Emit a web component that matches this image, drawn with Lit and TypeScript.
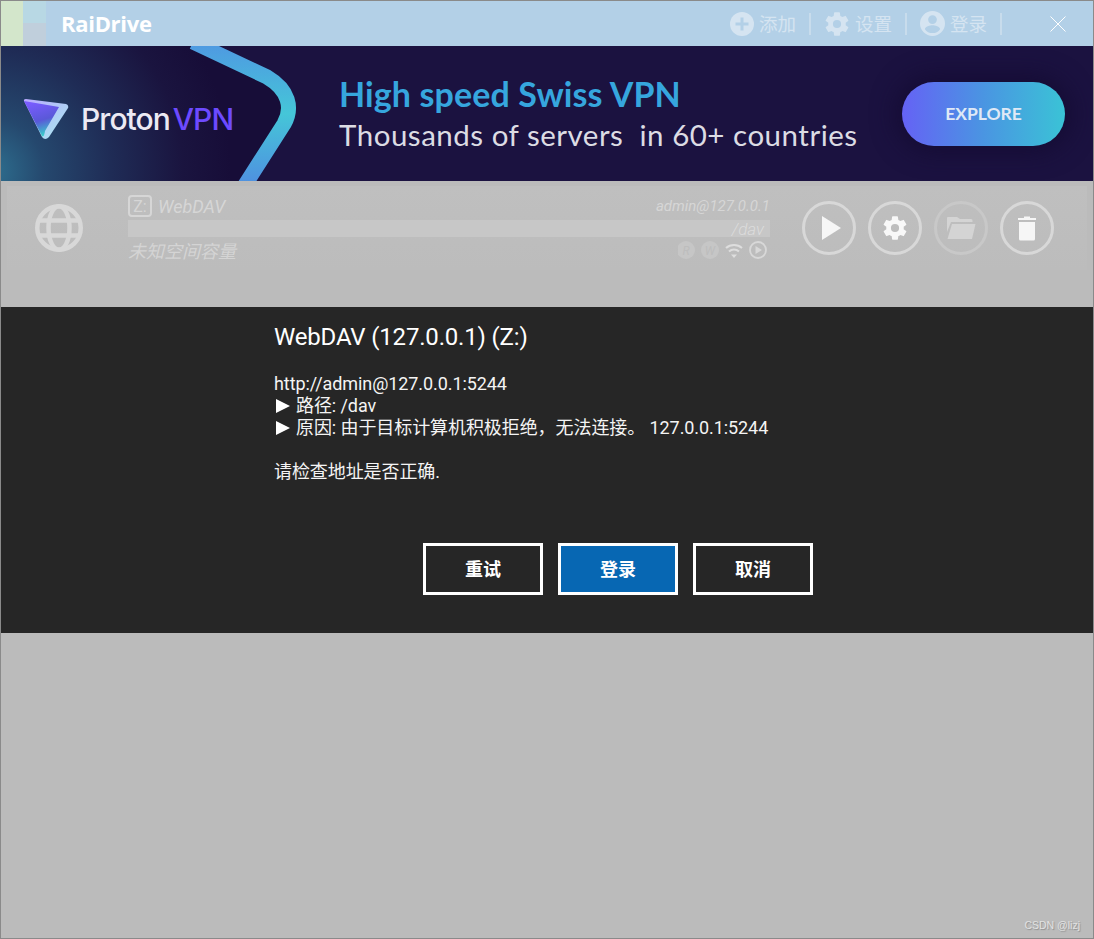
import { LitElement, html, css } from "lit";
import { customElement } from "lit/decorators.js";

const gear = (fill: string, size: number) => html`<svg width=${size} height=${size} viewBox="0 0 24 24"><path fill=${fill} d="M19.43 12.98c.04-.32.07-.64.07-.98s-.03-.66-.07-.98l2.11-1.65a.5.5 0 0 0 .12-.64l-2-3.46a.5.5 0 0 0-.61-.22l-2.49 1a7.3 7.3 0 0 0-1.69-.98l-.38-2.65A.49.49 0 0 0 14 2h-4a.49.49 0 0 0-.49.42l-.38 2.65c-.61.25-1.17.59-1.69.98l-2.49-1a.49.49 0 0 0-.61.22l-2 3.46a.49.49 0 0 0 .12.64l2.11 1.65c-.04.32-.07.65-.07.98s.03.66.07.98l-2.11 1.65a.5.5 0 0 0-.12.64l2 3.46c.12.22.39.3.61.22l2.49-1c.52.4 1.08.73 1.69.98l.38 2.65c.03.24.24.42.49.42h4c.25 0 .46-.18.49-.42l.38-2.65c.61-.25 1.17-.59 1.69-.98l2.49 1c.23.09.49 0 .61-.22l2-3.46a.5.5 0 0 0-.12-.64l-2.11-1.65zM12 15.5a3.5 3.5 0 1 1 0-7 3.5 3.5 0 0 1 0 7z"/></svg>`;

@customElement("app-root")
export class AppRoot extends LitElement {
  static styles = css`
    :host { display: block; position: relative; width: 1094px; height: 939px; box-sizing: border-box; border: 1px solid #8a8a8a; background: #bbbbbb; font-family: Roboto, "Noto Sans CJK SC", sans-serif; overflow: hidden; }
    .shell { display: flex; flex-direction: column; height: 100%; }
    .titlebar { height: 45px; flex: none; display: flex; align-items: center; background: #b3d0e7; }
    .tiles { display: grid; grid-template-columns: 22px 23px; grid-template-rows: 22px 23px; height: 45px; width: 45px; }
    .t1 { grid-row: 1 / 3; background: #d3e6cb; }
    .t2 { background: #b8d8e4; }
    .t3 { background: #c0cfdc; }
    .brand { margin: -2px 0 0 15px; font: 700 22px "Open Sans", sans-serif; letter-spacing: -0.3px; color: #fff; }
    .tools { margin-left: auto; display: flex; align-items: center; height: 100%; }
    .tool { display: flex; align-items: center; gap: 5px; color: #d5e4f1; font: 18.5px "Noto Sans CJK SC", sans-serif; }
    .tool.g { gap: 4px; }
    .tool span { display: block; width: 37px; white-space: nowrap; margin-top: -2px; }
    .sep { width: 2px; height: 22px; background: #c8dcec; margin: 0 13px; }
    .sep.a { margin-right: 12px; }
    .close { margin-left: 35px; margin-right: 27px; display: block; }

    .banner { position: relative; height: 135px; flex: none; background: #1b1240; display: flex; align-items: center; overflow: hidden; }
    .art { position: absolute; left: 0; top: 0; }
    .logo { position: relative; display: flex; align-items: center; margin: 11px 0 0 22px; width: 316px; }
    .logotext { margin-left: 12px; font: 500 30px Inter, sans-serif; letter-spacing: -0.95px; color: #eceaf4; }
    .logotext b { font-weight: 500; color: #6d4aff; margin-left: 3px; }
    .pitch { position: relative; width: 563px; margin-top: 2px; font-family: Lato, sans-serif; }
    .pitch .h { font-size: 34px; font-weight: 700; color: #36a6de; line-height: 40px; letter-spacing: 0.1px; }
    .pitch .s { font-size: 29.5px; font-weight: 400; color: #dcdce4; line-height: 42px; white-space: pre; letter-spacing: 0.51px; }
    .cta { position: relative; width: 163px; height: 64px; border-radius: 32px; background: linear-gradient(90deg, #6562f5, #4a95e2 50%, #3ac3d6); color: #dfe9f6; font: 700 17.5px Lato, sans-serif; display: flex; align-items: center; justify-content: center; box-shadow: 0 0 24px 6px #150c34; }

    .list { height: 126px; flex: none; box-sizing: border-box; padding: 5px 6px 0; background: #bbbbbb; }
    .drive { height: 84px; display: flex; background: linear-gradient(#bfbfbf, #bcbcbc); }
    .globe { width: 104px; flex: none; display: flex; align-items: center; justify-content: center; height: 84px; }
    .mid { width: 642px; margin-left: 17px; flex: none; padding-top: 9px; display: flex; flex-direction: column; }
    .l1 { height: 22px; display: flex; align-items: center; color: #d6d6d6; font-style: italic; font-size: 18px; }
    .z { width: 20px; height: 18px; border: 2px solid #d6d6d6; border-radius: 4px; font-style: normal; font-size: 16px; display: flex; align-items: center; justify-content: center; margin-right: 6px; }
    .admin { margin-left: auto; font-size: 15px; font-weight: 400; }
    .bar { margin-top: 3px; height: 17px; background: #c7c7c7; color: #dcdcdc; font-size: 17px; font-style: italic; font-weight: 300; text-align: right; padding-right: 6px; line-height: 18px; }
    .l3 { margin-top: 3px; height: 20px; display: flex; align-items: center; color: #d4d4d4; font-style: italic; font-size: 18px; }
    .stat { margin-left: auto; display: block; }
    .btns { display: flex; gap: 12px; margin-left: 32px; padding-top: 15px; }
    .rb { width: 54px; height: 54px; box-sizing: border-box; border: 3px solid #d8d8d8; border-radius: 50%; display: flex; align-items: center; justify-content: center; }
    .rb.off { border-color: #c8c8c8; }
    .rb.play svg { margin-left: 4px; }

    .dialog { height: 326px; flex: none; background: #262626; box-sizing: border-box; padding: 13px 0 0 273px; color: #fff; }
    .dt { font-size: 24px; line-height: 34px; font-weight: 400; letter-spacing: -0.18px; }
    .db { margin-top: 19px; font-size: 18px; line-height: 22px; color: #f4f4f4; letter-spacing: -0.08px; }
    .db div { white-space: pre; min-height: 22px; }
    .tri { display: inline-block; width: 0; height: 0; border-left: 14px solid #fff; border-top: 7px solid transparent; border-bottom: 7px solid transparent; margin: 0 6px 0 2px; vertical-align: -1px; }
    .acts { display: flex; gap: 15px; margin: 60px 0 0 149px; }
    .act { width: 120px; height: 52px; box-sizing: border-box; border: 3px solid #fff; background: #262626; color: #fff; font: 700 18px "Noto Sans CJK SC", sans-serif; display: flex; align-items: center; justify-content: center; padding-bottom: 2px; }
    .act.pri { background: #0767b3; }
    .rest { flex: 1; background: #bbbbbb; }
    .mark { position: absolute; right: 13px; bottom: 7px; font: 10.5px "Liberation Sans", sans-serif; color: #e2e2e2; text-shadow: 1px 1px 1px #8f8f8f; }
  `;

  render() {
    return html`<div class="shell">
      <div class="titlebar">
        <div class="tiles"><div class="t1"></div><div class="t2"></div><div class="t3"></div></div>
        <div class="brand">RaiDrive</div>
        <div class="tools">
          <div class="tool"><svg width="24" height="24" viewBox="0 0 24 24"><circle cx="12" cy="12" r="12" fill="#d5e4f1"/><path d="M12 5.500v13M5.500 12h13" stroke="#b3d0e7" stroke-width="3"/></svg><span>添加</span></div>
          <div class="sep a"></div>
          <div class="tool g">${gear("#d5e4f1", 28)}<span>设置</span></div>
          <div class="sep"></div>
          <div class="tool"><svg width="25" height="25" viewBox="0 0 24 24"><path fill="#d5e4f1" d="M12 0a12 12 0 1 0 0 24 12 12 0 0 0 0-24zm0 4a4.200 4.200 0 1 1 0 8.400A4.200 4.200 0 0 1 12 4zm0 17.200c-3 0-5.700-1.500-7.300-3.800.1-2.400 4.900-3.700 7.300-3.700s7.200 1.300 7.300 3.700A8.900 8.900 0 0 1 12 21.200z"/></svg><span>登录</span></div>
          <div class="sep"></div>
          <svg class="close" width="16" height="16" viewBox="0 0 16 16"><path d="M.5.500l15 15M15.500.500l-15 15" stroke="#fff" stroke-width="1"/></svg>
        </div>
      </div>

      <div class="banner">
        <svg class="art" width="1092" height="135" viewBox="0 0 1092 135">
          <defs>
            <radialGradient id="glow" gradientUnits="userSpaceOnUse" cx="-10" cy="125" r="240">
              <stop offset="0" stop-color="#2e7090"/><stop offset=".22" stop-color="#25486e"/><stop offset=".5" stop-color="#1f2c56"/><stop offset=".8" stop-color="#1a143f"/><stop offset="1" stop-color="#170d38"/>
            </radialGradient>
            <linearGradient id="band" x1="0" y1="0" x2="0" y2="1">
              <stop offset="0" stop-color="#4f98e2"/><stop offset=".5" stop-color="#45c6d8"/><stop offset="1" stop-color="#4f8fe0"/>
            </linearGradient>
          </defs>
          <path d="M0 0H195L270 36C290 48 292 62 285 76L245 135H0Z" fill="url(#glow)"/>
          <path d="M192 -4L266 31C288 44 292 62 283 78L244 139" fill="none" stroke="url(#band)" stroke-width="15"/>
        </svg>
        <div class="logo">
          <svg width="46" height="42" viewBox="0 0 46 42">
            <defs>
              <linearGradient id="tri" x1=".3" y1="0" x2=".6" y2="1"><stop offset="0" stop-color="#7a5cff"/><stop offset=".55" stop-color="#5a58d8"/><stop offset="1" stop-color="#36d8c8"/></linearGradient>
              <linearGradient id="edge" x1="0" y1="0" x2="1" y2="1"><stop offset="0" stop-color="#b9a8ff"/><stop offset="1" stop-color="#a8ecef"/></linearGradient>
            </defs>
            <path d="M1 3 Q0.500 1 3 1 L43 6 Q46 7 45 10 L26 39 Q22 43 19 39 Z" fill="url(#edge)"/>
            <path d="M1 3 L36 9 L22 33 Q21 40 19 38 Z" fill="url(#tri)"/>
          </svg>
          <div class="logotext">Proton<b>VPN</b></div>
        </div>
        <div class="pitch"><div class="h">High speed Swiss VPN</div><div class="s">Thousands of servers  in 60+ countries</div></div>
        <div class="cta">EXPLORE</div>
      </div>

      <div class="list">
        <div class="drive">
          <div class="globe">
            <svg width="48" height="48" viewBox="0 0 48 48" fill="none" stroke="#d8d8d8" stroke-width="4.500"><circle cx="24" cy="24" r="21.750"/><ellipse cx="24" cy="24" rx="10.500" ry="21.750"/><path d="M3 16.500h42M3 31.500h42"/></svg>
          </div>
          <div class="mid">
            <div class="l1"><div class="z">Z:</div>WebDAV<div class="admin">admin@127.0.0.1</div></div>
            <div class="bar">/dav</div>
            <div class="l3">未知空间容量
              <svg class="stat" width="92" height="18" viewBox="0 0 92 18">
                <circle cx="8" cy="9" r="9" fill="#c6c6c6"/><text x="8" y="13.500" text-anchor="middle" font-size="12" font-family="Roboto" fill="#bdbdbd">R</text>
                <circle cx="32" cy="9" r="9" fill="#c6c6c6"/><text x="32" y="13.500" text-anchor="middle" font-size="12" font-family="Roboto" fill="#bdbdbd">W</text>
                <path d="M48 7a12 12 0 0 1 16 0M51 10.500a7.500 7.500 0 0 1 10 0" fill="none" stroke="#dedede" stroke-width="2"/><path d="M53 13.500h6l-3 3.500z" fill="#dedede"/>
                <circle cx="80" cy="9" r="8" fill="none" stroke="#d8d8d8" stroke-width="1.800"/><path d="M77.500 5l6.500 4-6.500 4z" fill="#d8d8d8"/>
              </svg>
            </div>
          </div>
          <div class="btns">
            <div class="rb play"><svg width="19" height="24" viewBox="0 0 19 24"><path d="M0 0L19 12L0 24Z" fill="#f6f6f6"/></svg></div>
            <div class="rb">${gear("#f8f8f8", 28)}</div>
            <div class="rb off"><svg width="30" height="24" viewBox="0 0 30 24"><path fill="#d4d4d4" d="M2 1h9l3 2h11a1.500 1.500 0 0 1 1.500 1.500V6H5L1 16V2a1 1 0 0 1 1-1zM6 8h23.500L26 23H1.500z"/></svg></div>
            <div class="rb"><svg width="20" height="25" viewBox="0 0 20 25"><path fill="#f6f6f6" d="M1 2h6V.500h6V2h6v2H1zM2 6h16v17a1.500 1.500 0 0 1-1.500 1.500h-13A1.500 1.500 0 0 1 2 23z"/></svg></div>
          </div>
        </div>
      </div>

      <div class="dialog">
        <div class="dt">WebDAV (127.0.0.1) (Z:)</div>
        <div class="db">
          <div>http://admin@127.0.0.1:5244</div>
          <div><i class="tri"></i>路径: /dav</div>
          <div><i class="tri"></i>原因: 由于目标计算机积极拒绝，无法连接。 127.0.0.1:5244</div>
          <div></div>
          <div>请检查地址是否正确.</div>
        </div>
        <div class="acts">
          <div class="act">重试</div>
          <div class="act pri">登录</div>
          <div class="act">取消</div>
        </div>
      </div>
      <div class="rest"></div>
    </div>
    <div class="mark">CSDN @lizj</div>`;
  }
}
